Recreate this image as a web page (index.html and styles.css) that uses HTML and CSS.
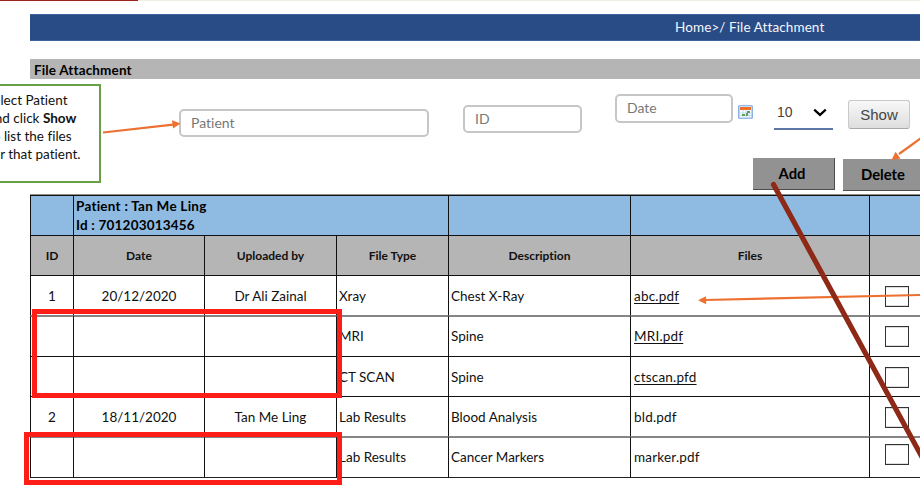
FILE: index.html
```html
<!DOCTYPE html>
<html lang="en">
<head>
<meta charset="utf-8">
<title>File Attachment</title>
<link rel="stylesheet" href="styles.css">
</head>
<body>
<div class="strip"><span class="strip-accent"></span></div>
<nav class="breadcrumb"><span>Home&gt;/ File Attachment</span></nav>
<h1 class="title"><span>File Attachment</span></h1>

<form class="filters">
  <div class="field field-patient"><span>Patient</span></div>
  <div class="field field-id"><span>ID</span></div>
  <div class="field field-date"><span>Date</span></div>
  <svg class="calendar" width="15" height="14" viewBox="0 0 15 14">
    <rect x=".75" y=".75" width="13.5" height="12.5" rx=".6" fill="#e5f0fc" stroke="#78a5dc" stroke-width="1.2"/>
    <path d="M2 2h11v3H2z" fill="#ed702f"/>
    <path d="M2 5h11v7H2z" fill="#fff"/>
    <path d="M5 5v7M8 5v7M11 5v7M2 8h11M2 10.5h11" stroke="#b9d3ef" stroke-width=".8"/>
    <path d="M9 6h3v2H9zM4 9h3v2H4zM8 8h2v3H8z" fill="#5fa060"/>
  </svg>
  <div class="select"><span>10</span>
    <svg width="14" height="9" viewBox="0 0 14 9"><path d="M1.2 1.6 7 6.900l5.800-5.300" fill="none" stroke="#000" stroke-width="2.2"/></svg>
  </div>
  <div class="show"><span>Show</span></div>
</form>

<div class="actions">
  <div class="action add"><span>Add</span></div>
  <div class="action delete"><span>Delete</span></div>
</div>

<table class="files">
  <colgroup><col class="c-id"><col class="c-date"><col class="c-by"><col class="c-type"><col class="c-desc"><col class="c-file"><col class="c-check"></colgroup>
  <tr class="patient"><td></td><td colspan="3"><span class="p-name">Patient : Tan Me Ling</span><br><span class="p-id">Id : 701203013456</span></td><td></td><td></td><td></td></tr>
  <tr class="head"><th>ID</th><th>Date</th><th>Uploaded by</th><th>File Type</th><th>Description</th><th>Files</th><th></th></tr>
  <tr><td class="mid">1</td><td class="mid">20/12/2020</td><td class="mid">Dr Ali Zainal</td><td>Xray</td><td>Chest X-Ray</td><td class="file"><span class="link">abc.pdf</span></td><td class="check"><i class="box"></i></td></tr>
  <tr class="soft"><td></td><td></td><td></td><td>MRI</td><td>Spine</td><td class="file"><span class="link">MRI.pdf</span></td><td class="check"><i class="box"></i></td></tr>
  <tr><td></td><td></td><td></td><td>CT SCAN</td><td>Spine</td><td class="file"><span class="link">ctscan.pfd</span></td><td class="check"><i class="box"></i></td></tr>
  <tr><td class="mid">2</td><td class="mid">18/11/2020</td><td class="mid">Tan Me Ling</td><td>Lab Results</td><td>Blood Analysis</td><td class="file">bld.pdf</td><td class="check"><i class="box"></i></td></tr>
  <tr class="soft last"><td></td><td></td><td></td><td>Lab Results</td><td>Cancer Markers</td><td class="file">marker.pdf</td><td class="check"><i class="box"></i></td></tr>
</table>

<aside class="callout">
  <p>Select Patient</p>
  <p>and click <b>Show</b></p>
  <p>to list the files</p>
  <p>for that patient.</p>
</aside>
<div class="mark mark-first"></div>
<div class="mark mark-second"></div>
<svg class="arrows" width="920" height="489" viewBox="0 0 920 489">
  <g stroke="#ed7031" stroke-width="2.2" fill="none">
    <path d="M103 132.500 173 124.700"/>
    <path d="M924 136 899 154"/>
    <path d="M920 295 705 300"/>
  </g>
  <g fill="#ed7031">
    <path d="M180.500 123.500 172 120.300 173 128.600z"/>
    <path d="M891.500 160 895.500 151.800 900.500 158.500z"/>
    <path d="M698 300.300 706 296.200 706.200 304.200z"/>
  </g>
  <path d="M773.500 184.500 922 457" stroke="#8e2817" stroke-width="5.200" stroke-linecap="round"/>
</svg>
</body>
</html>
```
FILE: styles.css
```css
* { box-sizing: border-box; }
body {
  margin: 0;
  width: 920px;
  height: 489px;
  overflow: hidden;
  position: relative;
  background: #fff;
  color: #111;
  font: 14px/18px Lato, "Liberation Sans", sans-serif;
  font-variant-ligatures: none;
}
.strip { height: 1px; background: #efeee0; }
.strip-accent { display: block; width: 138px; height: 1px; background: #9e241c; }
.breadcrumb {
  margin: 13px 0 0 30px;
  height: 27px;
  padding-left: 645px;
  background: #294c86;
  border: solid #3d629d;
  border-width: 1px 0 1px 0;
  color: #f3f6fb;
  font-size: 13.500px;
  line-height: 25px;
  letter-spacing: .1px;
  white-space: nowrap;
}
.title {
  margin: 18px 0 0 30px;
  height: 20px;
  padding-left: 4px;
  background: #b5b5b5;
  color: #000;
  font-size: 13.500px;
  letter-spacing: .15px;
  font-weight: 700;
  line-height: 22px;
}
.filters { display: flex; align-items: flex-start; height: 78px; padding-left: 179px; color: #777; }
.field {
  flex: none;
  height: 28px;
  padding-left: 10px;
  border: 2px solid #c6c6c6;
  border-radius: 5px;
  font-size: 14px;
  line-height: 24px;
}
.field-patient { width: 250px; margin-top: 30px; }
.field-id { width: 119px; margin: 26px 0 0 34px; }
.field-date { width: 118px; height: 29px; margin: 15px 0 0 33px; }
.calendar { flex: none; margin: 26px 0 0 5px; }
.select {
  flex: none;
  display: flex;
  align-items: center;
  justify-content: space-between;
  width: 59px;
  height: 32px;
  margin: 19px 0 0 21px;
  padding: 1px 6px 2px 3px;
  border-bottom: 2px solid #5f77a5;
  color: #4a4038;
  font: 14px/18px "Liberation Sans", sans-serif;
}
.select span { margin-top: -2px; }
.show {
  flex: none;
  width: 62px;
  height: 29px;
  margin: 21px 0 0 15px;
  border: 1px solid #c9c9c9;
  border-bottom-color: #aaa;
  border-radius: 3px;
  background: linear-gradient(#f8f8f8, #dedede);
  color: #444;
  font: 15px/28px "Liberation Sans", sans-serif;
  text-align: center;
}
.actions { display: flex; gap: 8px; height: 37px; padding-left: 753px; }
.action {
  flex: none;
  height: 32px;
  border-bottom: 1px solid #4c4c4c;
  background: #929292;
  color: #000;
  font-size: 14.800px;
  font-weight: 700;
  line-height: 31px;
  text-align: center;
}
.add { width: 82px; margin-top: 1px; border-right: 1px solid #4c4c4c; padding-right: 3px; }
.delete { width: 81px; margin-top: 2px; padding-right: 1px; }
.files {
  table-layout: fixed;
  width: 910px;
  margin-left: 30px;
  border-collapse: separate;
  border-spacing: 0;
  border-top: 1px solid #8e8e8e;
  font-size: 13.500px;
  line-height: 18px;
}
.c-id { width: 43px; }
.c-date { width: 131px; }
.c-by { width: 132px; }
.c-type { width: 112px; }
.c-desc { width: 182px; }
.c-file { width: 239px; }
.c-check { width: 71px; }
.files tr { height: 40px; }
.files td, .files th {
  padding: 1px 0 0 2px;
  border-top: 1px solid #111;
  border-left: 1px solid #111;
  vertical-align: middle;
  white-space: nowrap;
}
.files .soft { height: 41px; }
.files .soft td { border-top: 2px solid #858585; padding-bottom: 2px; }
.files .last { height: 42px; }
.files .last td { border-bottom: 1px solid #222; }
.files .patient td { padding-top: 0; background: #8fbae1; color: #000; font-weight: 700; line-height: 19px; }
.p-name { letter-spacing: .25px; }
.p-id { letter-spacing: .2px; }
.files .head th { padding-left: 0; background: #b5b5b5; font-size: 12px; font-weight: 700; }
.files .mid { padding-left: 0; text-align: center; }
.files .file { padding-left: 3px; letter-spacing: .2px; }
.link { text-decoration: underline; text-underline-offset: 2px; text-decoration-thickness: 1px; }
.files .check { padding-left: 15px; }
.box { display: block; width: 24px; height: 21px; border: 1px solid #333; box-shadow: inset 0 1px #ddd, inset 0 -1px #ddd; background: #fff; }
.last .box { margin-top: -5px; }
.callout {
  position: absolute;
  left: -40px;
  top: 84px;
  width: 141px;
  height: 99px;
  padding: 5px 0 0 26px;
  border: 2px solid #67a046;
  background: #fff;
  font-size: 13.500px;
  line-height: 18px;
  white-space: nowrap;
}
.callout p { margin: 0; }
.callout p:first-child { margin-left: -2px; }
.mark { position: absolute; border: 5px solid #ff1e17; }
.mark-first { left: 32px; top: 309px; width: 310px; height: 89px; }
.mark-second { left: 24px; top: 432px; width: 318px; height: 53px; }
.arrows { position: absolute; left: 0; top: 0; }
```
